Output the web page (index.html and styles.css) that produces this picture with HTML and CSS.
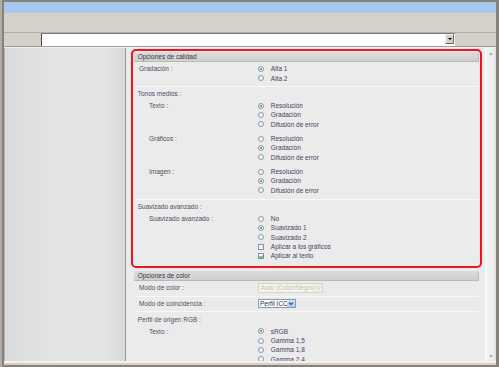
FILE: index.html
```html
<!DOCTYPE html>
<html lang="es">
<head>
    <meta charset="UTF-8">
    <title>Opciones de calidad</title>
    <link rel="stylesheet" href="styles.css">
</head>
<body>
<div class="window">
    <div class="titlebar"></div>
    <div class="toolbar"></div>
    <div class="addressbar">
        <div class="address-input"><span class="dd-btn"></span></div>
    </div>
    <div class="workspace">
        <div class="sidebar"></div>
        <div class="content">
            <div class="section highlight">
                <div class="section-head">Opciones de calidad</div>
                <div class="field">
                    <div class="field-label">Gradación :</div>
                    <div class="options">
                        <div class="opt"><span class="radio on"></span>Alta 1</div>
                        <div class="opt"><span class="radio"></span>Alta 2</div>
                    </div>
                </div>
                <div class="group">
                    <div class="group-label">Tonos medios :</div>
                    <div class="field">
                        <div class="field-label">Texto :</div>
                        <div class="options">
                            <div class="opt"><span class="radio on"></span>Resolución</div>
                            <div class="opt"><span class="radio"></span>Gradación</div>
                            <div class="opt"><span class="radio"></span>Difusión de error</div>
                        </div>
                    </div>
                    <div class="field">
                        <div class="field-label">Gráficos :</div>
                        <div class="options">
                            <div class="opt"><span class="radio"></span>Resolución</div>
                            <div class="opt"><span class="radio on"></span>Gradación</div>
                            <div class="opt"><span class="radio"></span>Difusión de error</div>
                        </div>
                    </div>
                    <div class="field">
                        <div class="field-label">Imagen :</div>
                        <div class="options">
                            <div class="opt"><span class="radio"></span>Resolución</div>
                            <div class="opt"><span class="radio on"></span>Gradación</div>
                            <div class="opt"><span class="radio"></span>Difusión de error</div>
                        </div>
                    </div>
                </div>
                <div class="group last">
                    <div class="group-label">Suavizado avanzado :</div>
                    <div class="field">
                        <div class="field-label">Suavizado avanzado :</div>
                        <div class="options">
                            <div class="opt"><span class="radio"></span>No</div>
                            <div class="opt"><span class="radio on"></span>Suavizado 1</div>
                            <div class="opt"><span class="radio"></span>Suavizado 2</div>
                            <div class="opt"><span class="check"></span>Aplicar a los gráficos</div>
                            <div class="opt"><span class="check on"></span>Aplicar al texto</div>
                        </div>
                    </div>
                </div>
            </div>

            <div class="section">
                <div class="section-head">Opciones de color</div>
                <div class="field inline">
                    <div class="field-label">Modo de color :</div>
                    <div class="select disabled">
                        <span class="val">Auto (Color/Negro)</span>
                        <span class="arrow"><svg width="7" height="8" viewBox="0 0 7 8"><polyline points="1.5,3 3.5,5 5.5,3" fill="none" stroke="#d8d6c8" stroke-width="1.2"/></svg></span>
                    </div>
                </div>
                <div class="field inline tight">
                    <div class="field-label">Modo de coincidencia :</div>
                    <div class="select icc">
                        <span class="val">Perfil ICC</span>
                        <span class="arrow"><svg width="8" height="7" viewBox="0 0 8 7"><polyline points="2,2.5 4,4.5 6,2.5" fill="none" stroke="#4a5f8a" stroke-width="1.3"/></svg></span>
                    </div>
                </div>
                <div class="group rgb">
                    <div class="group-label">Perfil de origen RGB :</div>
                    <div class="field">
                        <div class="field-label">Texto :</div>
                        <div class="options">
                            <div class="opt"><span class="radio on"></span>sRGB</div>
                            <div class="opt"><span class="radio"></span>Gamma 1,5</div>
                            <div class="opt"><span class="radio"></span>Gamma 1,8</div>
                            <div class="opt"><span class="radio"></span>Gamma 2,4</div>
                        </div>
                    </div>
                </div>
            </div>
        </div>
        <div class="scrollbar">
            <span class="sb-up"></span>
            <span class="sb-down"></span>
        </div>
    </div>
    <div class="statusbar"></div>
</div>
</body>
</html>
```

FILE: styles.css
```css
* {
    box-sizing: border-box;
}

html, body {
    margin: 0;
    padding: 0;
}

body {
    width: 499px;
    height: 367px;
    overflow: hidden;
    background: #86827b;
    font-family: "Liberation Sans", Arial, sans-serif;
    font-size: 6.5px;
    color: #524c64;
}

.window {
    height: 367px;
    display: flex;
    flex-direction: column;
    padding: 2px 3px 2px 4px;
    box-shadow: inset 2px 0 #b2aea7;
}

.titlebar {
    height: 11px;
    background: #a7c8ee;
}

.toolbar {
    height: 19px;
    background: #d5d1c9;
}

.addressbar {
    height: 15px;
    background: #d5d1c9;
    border-top: 1px solid #b3afa7;
    border-bottom: 1px solid #a29e96;
    padding: 0 41px 0 37px;
}

.address-input {
    height: 13px;
    background: #fff;
    border-left: 1px solid #4a4a4a;
    border-top: 1px solid #7a7a7a;
    display: flex;
    justify-content: flex-end;
    align-items: flex-start;
    padding-right: 1px;
}

.dd-btn {
    width: 9px;
    height: 10px;
    background: #d5d1c9;
    border: 1px solid;
    border-color: #f4f2ee #6e6a64 #6e6a64 #f4f2ee;
    display: flex;
    align-items: center;
    justify-content: center;
}

.dd-btn::after {
    content: "";
    border-top: 2px solid #000;
    border-left: 2px solid transparent;
    border-right: 2px solid transparent;
}

.workspace {
    flex: 1;
    min-height: 0;
    display: flex;
    border-top: 1px solid #efefef;
}

.sidebar {
    width: 122px;
    border-left: 1px solid #b4b4b4;
    border-right: 1px solid #9c9c9c;
    background: linear-gradient(to right, #d9dbdd, #e4e5e7 45%, #e2e3e5 85%, #d7d9db);
}

.content {
    flex: 1;
    background: #ebebeb;
    padding: 1px 3px 0 5px;
    overflow: hidden;
}

.scrollbar {
    width: 11px;
    background: linear-gradient(to right, #fbfbfb, #f0f0f0 30%, #eeeeee 80%, #dcdcdc);
    display: flex;
    flex-direction: column;
    justify-content: space-between;
    align-items: center;
    padding: 4px 0 3px;
}

.sb-up {
    border-bottom: 3px solid #b2b2b2;
    border-left: 2.5px solid transparent;
    border-right: 2.5px solid transparent;
}

.sb-down {
    border-top: 3px solid #b2b2b2;
    border-left: 2.5px solid transparent;
    border-right: 2.5px solid transparent;
}

.statusbar {
    height: 4px;
    border-top: 2px solid #f3f1ed;
    background: #d5d1c9;
}

/* sections */
.section {
    border: 2px solid transparent;
    padding: 1px;
}

.highlight {
    border-color: #f0141e;
    border-radius: 5px;
}

.section-head {
    height: 10px;
    line-height: 10px;
    padding-left: 3.7px;
    color: #36364a;
    background: linear-gradient(#dcdcdc, #cfcfcf);
    border-bottom: 1px solid #b9b9b9;
    border-right: 1px solid #bdbdbd;
    border-radius: 0 2px 0 0;
}

.field {
    display: grid;
    grid-template-columns: 124px 1fr;
    align-items: start;
    padding: 2.3px 0 2.9px;
    border-bottom: 1px solid #f8f8f8;
}

.field-label {
    padding-left: 5px;
    line-height: 9.4px;
    white-space: nowrap;
}

.field.inline {
    align-items: center;
    padding: 2.3px 0 2.7px;
}

.options {
    display: flex;
    flex-direction: column;
}

.opt {
    display: flex;
    align-items: center;
    gap: 6.5px;
    height: 9.4px;
    line-height: 9.4px;
    padding-left: 0.3px;
    color: #463f5c;
    white-space: nowrap;
}

.group {
    padding: 2.3px 0 3.8px;
    border-bottom: 1px solid #f8f8f8;
}

.group.last {
    padding-bottom: 4px;
    border-bottom: none;
}

.group.rgb {
    padding-top: 3px;
    border-bottom: none;
}

.group-label {
    padding-left: 3.7px;
    line-height: 9.4px;
}

.group .field {
    padding: 0;
    border: none;
    margin-top: 4.8px;
}

.group .field:nth-child(2) {
    margin-top: 2.3px;
}

.group.rgb .field:nth-child(2) {
    margin-top: 1.9px;
}

.group .field-label {
    padding-left: 15px;
}

/* controls */
.radio {
    width: 6px;
    height: 6px;
    flex: none;
    border: 1px solid #8396ab;
    border-radius: 50%;
    background: #f6f6f6;
    display: flex;
    align-items: center;
    justify-content: center;
}

.radio.on::after {
    content: "";
    width: 2px;
    height: 2px;
    border-radius: 50%;
    background: #2f9a36;
}

.check {
    width: 6px;
    height: 6px;
    flex: none;
    border: 1px solid #8396ab;
    background: #f8f8f8;
    display: flex;
    align-items: center;
    justify-content: center;
}

.check.on::after {
    content: "";
    width: 1.5px;
    height: 3px;
    margin-top: -1px;
    border-right: 1px solid #2f9a36;
    border-bottom: 1px solid #2f9a36;
    transform: rotate(45deg);
}

.select {
    display: flex;
    height: 10px;
    border: 1px solid;
    line-height: 8px;
    overflow: hidden;
}

.select .val {
    flex: 1;
    padding-left: 2px;
    white-space: nowrap;
    overflow: hidden;
}

.select .arrow {
    flex: none;
    display: flex;
    align-items: center;
    justify-content: center;
}

.select.disabled {
    width: 65px;
    border-color: #d6d4c6;
    background: #f4f3ee;
    color: #c8c5ad;
}

.select.disabled .arrow {
    width: 8px;
    background: #f0efe7;
    border-left: 1px solid #e2e0d5;
}

.select.icc {
    width: 38px;
    height: 9px;
    border-color: #7f9db9;
    background: #fff;
    color: #30283f;
    line-height: 7px;
}

.select.icc .val {
    padding-left: 1px;
}

.select.icc .arrow {
    width: 8px;
    background: linear-gradient(#d6e2fd, #b5c8f5);
}
```
